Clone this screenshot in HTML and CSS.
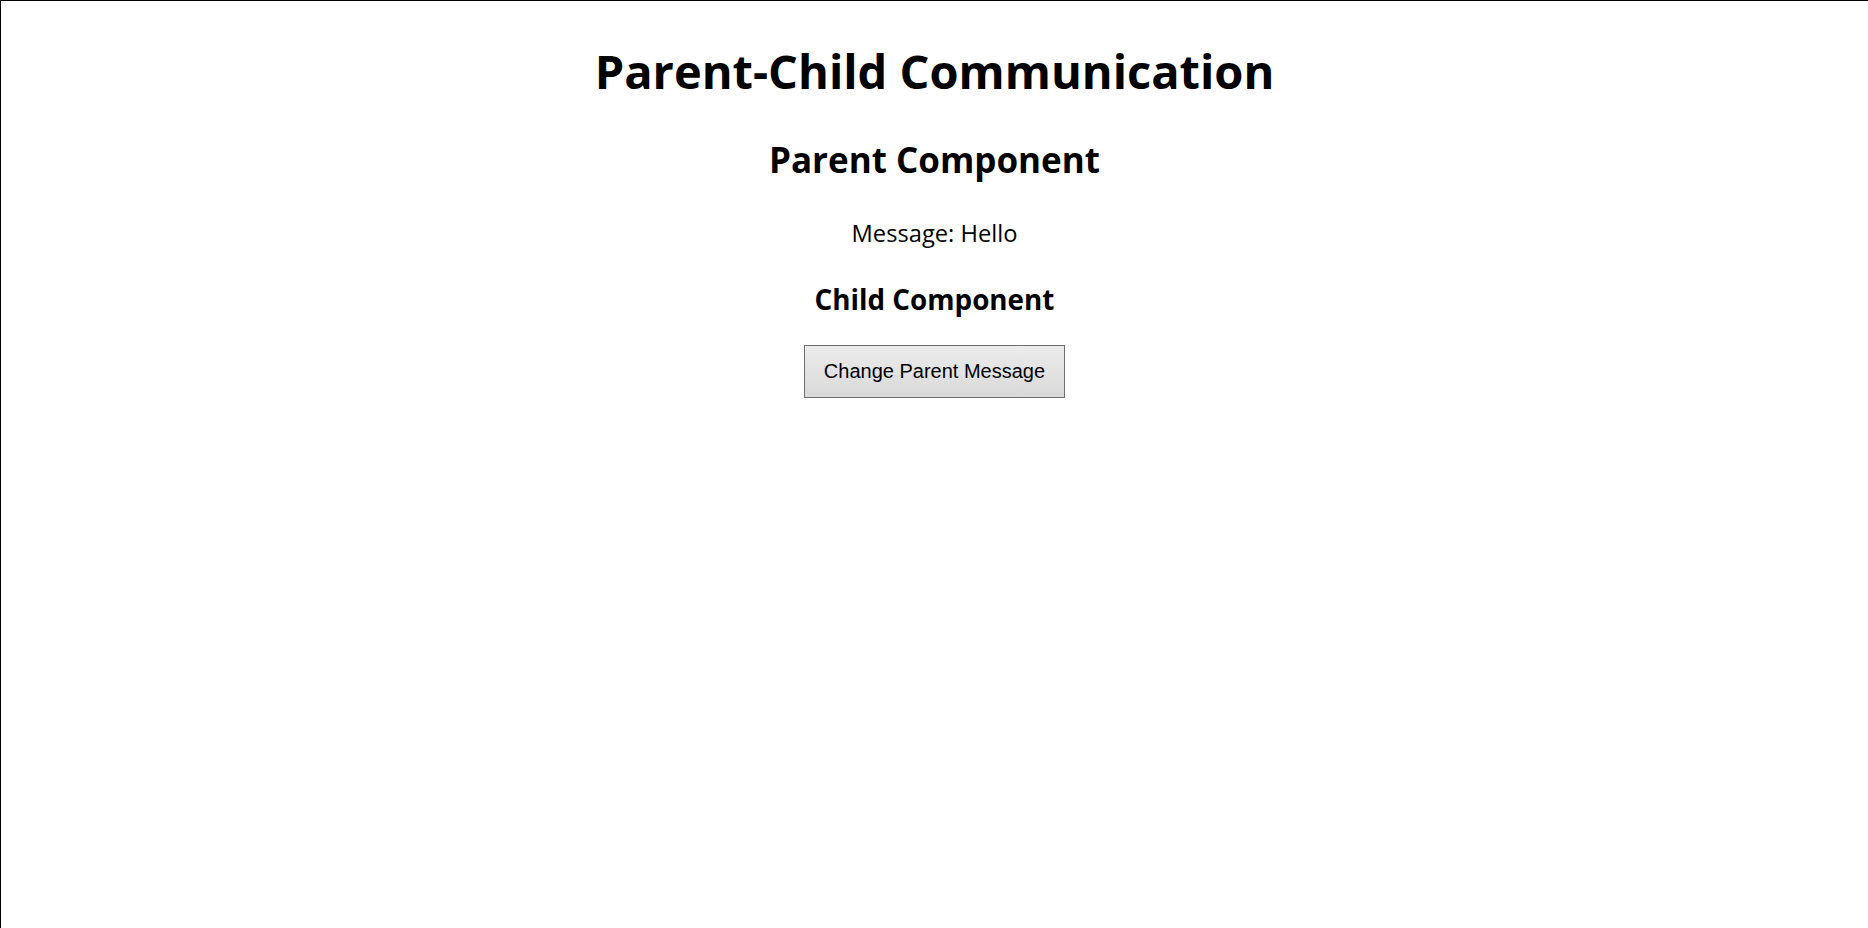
FILE: index.html
```html
<!DOCTYPE html>
<html lang="en">
<head>
<meta charset="utf-8">
<title>Parent-Child Communication</title>
<link rel="stylesheet" href="styles.css">
</head>
<body>
<div class="frame">
  <div class="app">
    <h1 class="title">Parent-Child Communication</h1>
    <section class="parent">
      <h2 class="parent-title">Parent Component</h2>
      <p class="message">Message: Hello</p>
      <section class="child">
        <h3 class="child-title">Child Component</h3>
        <button class="change-btn" type="button">Change Parent Message</button>
      </section>
    </section>
  </div>
</div>
</body>
</html>
```

FILE: styles.css
```css
html, body {
  margin: 0;
  padding: 0;
  background: #ffffff;
}

.frame {
  box-sizing: border-box;
  min-height: 100vh;
  border-top: 1px solid #000;
  border-left: 1px solid #000;
  font-family: "Open Sans", "Noto Sans", sans-serif;
  color: #000;
  text-align: center;
  padding-top: 38px;
}

.app {
  display: flex;
  flex-direction: column;
  align-items: center;
}

.title {
  margin: 0;
  font-size: 47px;
  font-weight: 700;
  line-height: 64px;
}

.parent {
  display: flex;
  flex-direction: column;
  align-items: center;
}

.parent-title {
  margin: 33px 0 0;
  font-size: 35px;
  font-weight: 700;
  line-height: 48px;
}

.message {
  margin: 33px 0 0;
  font-size: 23.7px;
  line-height: 32px;
}

.child {
  display: flex;
  flex-direction: column;
  align-items: center;
}

.child-title {
  margin: 32px 0 0;
  font-size: 27.8px;
  font-weight: 700;
  line-height: 37px;
}

.change-btn {
  margin-top: 27px;
  font-family: "Liberation Sans", Arial, sans-serif;
  font-size: 20px;
  line-height: 27px;
  color: #000;
  padding: 12px 19px;
  border: 1px solid #707070;
  border-radius: 0;
  background: linear-gradient(#ececec, #d9d9d9);
  cursor: pointer;
}
```
